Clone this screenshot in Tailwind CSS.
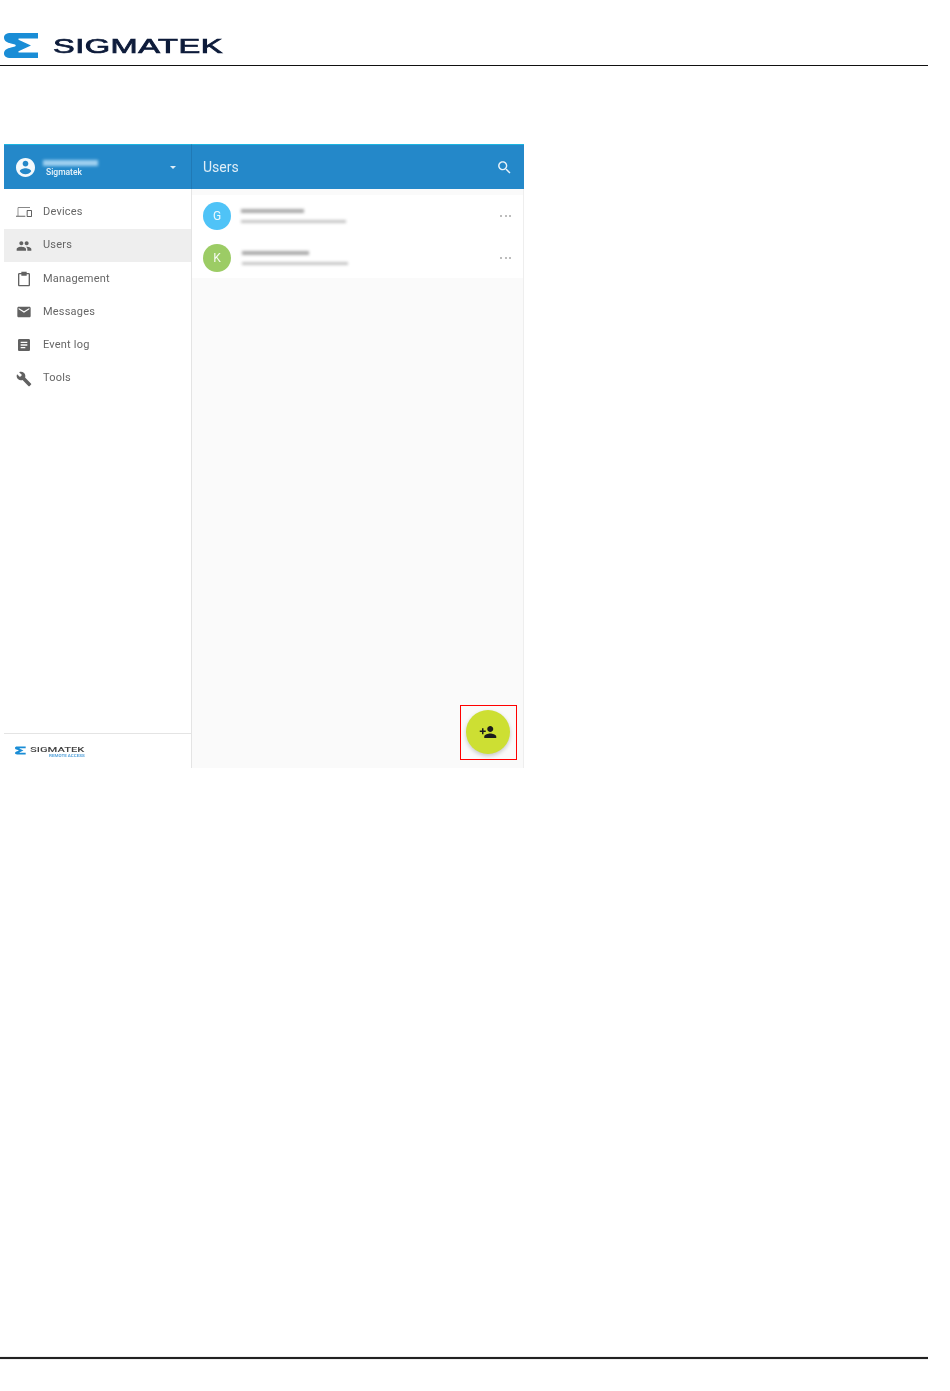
<!DOCTYPE html>
<html lang="en">
<head>
    <meta charset="UTF-8">
    <title>Users</title>
    <script src="https://cdn.jsdelivr.net/npm/@tailwindcss/browser@4"></script>
</head>
<body class="bg-white font-['Roboto',sans-serif]">
<div class="w-[928px] h-[1391px] overflow-hidden">

    <!-- page header -->
    <div class="h-[66px] border-b border-[#111] relative">
        <svg class="absolute left-[4px] top-[33px]" width="35" height="25" viewBox="0 0 35 25">
            <path fill="#1a8dd6" d="M7 0H34V5.500H15C14 5.500 14 6.500 15 7L27 12.500L15 18C14 18.500 14 19.500 15 19.500H34V25H7C2 25 0 23 0 20.500C0 17 3 15.500 7 14.500L11 13.500C12 13 12 12 11 11.500L7 10.500C3 9.500 0 8 0 4.500C0 2 2 0 7 0Z"/>
        </svg>
        <div class="absolute left-[53px] top-[35px] w-[169px] origin-left scale-x-[1.67] font-['Liberation_Sans',sans-serif] text-[19.500px] leading-[22px] tracking-[0.3px] text-[#0d1b3a] [-webkit-text-stroke:0.7px_#0d1b3a] whitespace-nowrap blur-[0.3px]">SIGMATEK</div>
    </div>

    <!-- app window -->
    <div class="relative mt-[78px] ml-[4px] w-[520px] h-[624px] flex bg-[#fafafa]">
        <div class="w-[188px] shrink-0 flex flex-col bg-white border-r border-[#e4e4e4] blur-[0.3px]">
            <div class="h-[45px] shrink-0 -mr-[1px] bg-[#2488c9] border-t border-t-[#1cb5e0] border-r border-r-[#2079b5] flex items-center pl-[12px] pr-[15px]">
                <svg class="w-[19px] h-[19px] fill-white/95" viewBox="2 2 20 20"><path d="M12 2C6.480 2 2 6.480 2 12s4.480 10 10 10 10-4.480 10-10S17.520 2 12 2zm0 3c1.660 0 3 1.340 3 3s-1.340 3-3 3-3-1.340-3-3 1.340-3 3-3zm0 14.200c-2.500 0-4.710-1.280-6-3.220.030-1.990 4-3.080 6-3.080 1.990 0 5.970 1.090 6 3.080-1.290 1.940-3.500 3.220-6 3.220z"/></svg>
                <div class="ml-[8px] mt-[3px] flex-1">
                    <div class="w-[55px] h-[6px] bg-[#9fd0f0] blur-[1.5px]"></div>
                    <div class="ml-[3px] mt-[1px] text-[8.500px] leading-[11px] font-medium text-white/90">Sigmatek</div>
                </div>
                <div class="w-0 h-0 border-x-[3px] border-x-transparent border-t-[3px] border-t-white/85"></div>
            </div>
            <nav class="pt-[6.600px] flex-1 text-[11px] tracking-[0.2px] text-[#666]">
                <a class="h-[33.300px] flex items-center pl-[12px]">
                    <svg class="w-[16px] h-[16px] fill-[#616161]" viewBox="0 0 24 24"><path d="M3.500 6H21V5H3.500C2.700 5 2.500 5.500 2.500 6V17.500H0V19H14V17.500H3.500zM23 9H17C16.500 9 16 9.500 16 10V18.500C16 19 16.500 19.500 17 19.500H23C23.500 19.500 24 19 24 18.500V10C24 9.500 23.500 9 23 9zM22.500 18H17.500V10.500H22.500z"/></svg>
                    <span class="ml-[11px]">Devices</span>
                </a>
                <a class="h-[33.300px] flex items-center pl-[12px] bg-[#eeeeee]">
                    <svg class="w-[16px] h-[16px] fill-[#616161]" viewBox="0 0 24 24"><path d="M16 11c1.660 0 2.990-1.340 2.990-3S17.660 5 16 5c-1.660 0-3 1.340-3 3s1.340 3 3 3zm-8 0c1.660 0 2.990-1.340 2.990-3S9.660 5 8 5C6.340 5 5 6.340 5 8s1.340 3 3 3zm0 2c-2.330 0-7 1.170-7 3.500V19h14v-2.500c0-2.330-4.670-3.500-7-3.500zm8 0c-.290 0-.620.020-.970.050 1.160.840 1.970 1.970 1.970 3.450V19h6v-2.500c0-2.330-4.670-3.500-7-3.500z"/></svg>
                    <span class="ml-[11px]">Users</span>
                </a>
                <a class="h-[33.300px] flex items-center pl-[12px]">
                    <svg class="w-[16px] h-[16px] fill-[#616161]" viewBox="0 0 24 24"><path d="M19 3h-3V1H8v2H5c-1.100 0-2 .900-2 2v16c0 1.100.900 2 2 2h14c1.100 0 2-.900 2-2V5c0-1.100-.900-2-2-2zM19 21H5V5h3v2h8V5h3z"/></svg>
                    <span class="ml-[11px]">Management</span>
                </a>
                <a class="h-[33.300px] flex items-center pl-[12px]">
                    <svg class="w-[16px] h-[16px] fill-[#616161]" viewBox="0 0 24 24"><path d="M20 4H4c-1.100 0-1.990.900-1.990 2L2 18c0 1.100.900 2 2 2h16c1.100 0 2-.900 2-2V6c0-1.100-.900-2-2-2zm0 4l-8 5-8-5V6l8 5 8-5v2z"/></svg>
                    <span class="ml-[11px]">Messages</span>
                </a>
                <a class="h-[33.300px] flex items-center pl-[12px]">
                    <svg class="w-[16px] h-[16px] fill-[#616161]" viewBox="0 0 24 24"><path d="M19 3H5c-1.100 0-2 .900-2 2v14c0 1.100.900 2 2 2h14c1.100 0 2-.900 2-2V5c0-1.100-.900-2-2-2zm-5 14H7v-2h7v2zm3-4H7v-2h10v2zm0-4H7V7h10v2z"/></svg>
                    <span class="ml-[11px]">Event log</span>
                </a>
                <a class="h-[33.300px] flex items-center pl-[12px]">
                    <svg class="w-[16px] h-[16px] fill-[#616161]" viewBox="0 0 24 24"><path d="M22.700 19l-9.100-9.100c.900-2.300.400-5-1.500-6.900-2-2-5-2.400-7.400-1.300L9 6 6 9 1.600 4.700C.400 7.100.900 10.100 2.900 12.100c1.900 1.900 4.600 2.400 6.900 1.500l9.100 9.100c.400.400 1 .400 1.400 0l2.300-2.300c.500-.400.500-1.100.100-1.400z"/></svg>
                    <span class="ml-[11px]">Tools</span>
                </a>
            </nav>
            <div class="h-[35px] shrink-0 border-t border-[#e4e4e4] pl-[11px] pt-[11px] flex">
                <svg class="mt-[1px]" width="11" height="9" viewBox="0 0 35 25">
                    <path fill="#1a8dd6" d="M7 0H34V5.500H15C14 5.500 14 6.500 15 7L27 12.500L15 18C14 18.500 14 19.500 15 19.500H34V25H7C2 25 0 23 0 20.500C0 17 3 15.500 7 14.500L11 13.500C12 13 12 12 11 11.500L7 10.500C3 9.500 0 8 0 4.500C0 2 2 0 7 0Z"/>
                </svg>
                <div class="ml-[4px] w-[55px] relative">
                    <div class="origin-left scale-x-[1.4] text-[8px] leading-[9px] font-medium text-[#444] whitespace-nowrap">SIGMATEK</div>
                    <div class="absolute right-0 top-[9px] text-[3px] leading-[4px] font-bold text-[#5aa5dc] whitespace-nowrap origin-right scale-x-[1.5] blur-[0.2px]">REMOTE ACCESS</div>
                </div>
            </div>
        </div>

        <div class="flex-1 flex flex-col blur-[0.3px]">
            <div class="h-[45px] shrink-0 bg-[#2488c9] border-t border-[#1cb5e0] flex items-center pl-[11px] pr-[11px]">
                <span class="flex-1 text-[14px] text-white/85">Users</span>
                <svg class="w-[17px] h-[17px] fill-white/90" viewBox="0 0 24 24"><path d="M15.500 14h-.790l-.280-.270C15.410 12.590 16 11.110 16 9.500 16 5.910 13.090 3 9.500 3S3 5.910 3 9.500 5.910 16 9.500 16c1.610 0 3.090-.590 4.230-1.570l.270.280v.790l5 4.990L20.490 19l-4.990-5zm-6 0C7.010 14 5 11.990 5 9.500S7.010 5 9.500 5 14 7.010 14 9.500 11.990 14 9.500 14z"/></svg>
            </div>
            <div class="flex-1 pt-[6px] border-r border-[#eeeeee]">
                <div class="h-[83px] bg-white">
                    <div class="h-[42px] flex items-center pl-[11px] pr-[12px]">
                        <div class="w-[28px] h-[28px] rounded-full bg-[#4fc3f7] flex items-center justify-center text-[12px] text-white/90">G</div>
                        <div class="ml-[10px] flex-1">
                            <div class="w-[63px] h-[4px] bg-[#aaa] blur-[1.5px]"></div>
                            <div class="mt-[6.500px] w-[105px] h-[3px] bg-[#c4c4c4] blur-[1.5px]"></div>
                        </div>
                        <div class="flex gap-[2.500px]">
                            <i class="w-[2px] h-[2px] bg-[#bdbdbd]"></i><i class="w-[2px] h-[2px] bg-[#bdbdbd]"></i><i class="w-[2px] h-[2px] bg-[#bdbdbd]"></i>
                        </div>
                    </div>
                    <div class="h-[42px] flex items-center pl-[11px] pr-[12px]">
                        <div class="w-[28px] h-[28px] rounded-full bg-[#9ccc65] flex items-center justify-center text-[12px] text-white/90">K</div>
                        <div class="ml-[11px] flex-1">
                            <div class="w-[67px] h-[4px] bg-[#aaa] blur-[1.5px]"></div>
                            <div class="mt-[6.500px] w-[106px] h-[3px] bg-[#c4c4c4] blur-[1.5px]"></div>
                        </div>
                        <div class="flex gap-[2.500px]">
                            <i class="w-[2px] h-[2px] bg-[#bdbdbd]"></i><i class="w-[2px] h-[2px] bg-[#bdbdbd]"></i><i class="w-[2px] h-[2px] bg-[#bdbdbd]"></i>
                        </div>
                    </div>
                </div>
            </div>
        </div>

        <!-- add user button with its red callout -->
        <div class="absolute left-[456px] top-[561px] w-[57px] h-[55px] border border-[#f00] pr-[1px] pb-[1px] flex items-center justify-center">
            <button class="w-[44px] h-[44px] rounded-full bg-[#cddf33] shadow-[0_2px_4px_rgba(0,0,0,0.2)] flex items-center justify-center">
                <svg class="w-[18px] h-[18px] fill-[#1c1c1c]" viewBox="0 0 24 24"><path d="M15 12c2.210 0 4-1.790 4-4s-1.790-4-4-4-4 1.790-4 4 1.790 4 4 4zm-9-2V7H4v3H1v2h3v3h2v-3h3v-2H6zm9 4c-2.670 0-8 1.340-8 4v2h16v-2c0-2.660-5.330-4-8-4z"/></svg>
            </button>
        </div>
    </div>

    <!-- page footer rule -->
    <div class="mt-[589px] h-[2px] bg-[#222] shadow-[0_0_1px_#666]"></div>
</div>
</body>
</html>
